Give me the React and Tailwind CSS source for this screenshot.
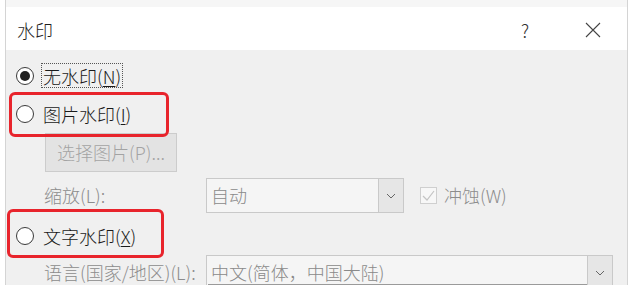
import React from "react";

const font = { fontFamily: '"Noto Sans CJK SC", "Noto Sans", sans-serif' };

function Radio({ checked }) {
  return (
    <span className="w-[18px] h-[18px] rounded-full border border-[#3a3a3a] bg-white flex items-center justify-center shrink-0">
      {checked && <span className="w-[10px] h-[10px] rounded-full bg-[#222]" />}
    </span>
  );
}

function Select({ text, width, underline }) {
  return (
    <div
      className="flex h-[35px] border border-[#c9c9c9] bg-[#f5f5f5] shrink-0"
      style={{ width }}
    >
      <div className="flex-1 flex items-center pl-[4px] text-[18px] text-[#8a8a8a] relative">
        {text}
        {underline && (
          <span className="absolute left-[1px] right-0 bottom-[2px] h-[3px] border-t border-b border-[#9a9a9a]" />
        )}
      </div>
      <div className="w-[25px] border-l border-[#c9c9c9] bg-[#e6e6e6] flex items-center justify-center">
        <svg width="10" height="6" viewBox="0 0 10 6">
          <path d="M1 1 L5 5 L9 1" fill="none" stroke="#666" strokeWidth="1" />
        </svg>
      </div>
    </div>
  );
}

export default function App() {
  return (
    <div className="w-[629px] h-[285px] bg-white overflow-hidden font-light" style={font}>
      <div className="ml-[5px] w-[623px] h-[285px] flex flex-col border-l border-r border-[#d4d4d4]">
        <div className="h-[7px] shrink-0 bg-[#f6f6f6]" />
        <div className="h-[43px] shrink-0 bg-white flex items-center pl-[11px] pr-[26px] pt-[3px] text-[18px] text-[#1e1e1e]">
          <span className="flex-1">水印</span>
          <span className="text-[#333] mr-[56px]">?</span>
          <svg width="16" height="16" viewBox="0 0 16 16">
            <path d="M1 1 L15 15 M15 1 L1 15" stroke="#444" strokeWidth="1.1" />
          </svg>
        </div>
        <div className="relative flex-1 min-h-0 overflow-hidden bg-[#f0f0f0] flex flex-col text-[18px] text-[#1a1a1a]">
          <div className="mt-[13px] h-[25px] shrink-0 flex items-center pl-[10px] gap-[7px]">
            <Radio checked />
            <span className="border border-dotted border-[#555] h-[25px] px-[1px] flex items-center leading-none">
              无水印(<span className="underline underline-offset-2">N</span>)
            </span>
          </div>
          <div className="mt-[14px] h-[24px] shrink-0 flex items-center pl-[10px] gap-[9px]">
            <Radio />
            <span className="leading-none">
              图片水印(<span className="underline underline-offset-2">I</span>)
            </span>
          </div>
          <div className="mt-[7px] ml-[39px] w-[132px] h-[39px] shrink-0 border border-[#cccccc] bg-[#e3e3e3] flex items-center justify-center text-[#a3a3a3]">
            选择图片(P)...
          </div>
          <div className="mt-[6px] h-[35px] shrink-0 flex items-center">
            <span className="ml-[38px] w-[162px] text-[#8c8c8c]">缩放(L):</span>
            <Select text="自动" width="198px" />
            <span className="ml-[16px] w-[17px] h-[17px] border border-[#cfcfcf] bg-[#f7f7f7] flex items-center justify-center">
              <svg width="13" height="11" viewBox="0 0 13 11">
                <path d="M1 6 L5 10 L12 1" fill="none" stroke="#c4c4c4" strokeWidth="1.2" />
              </svg>
            </span>
            <span className="ml-[7px] text-[#8c8c8c]">冲蚀(W)</span>
          </div>
          <div className="mt-[11px] h-[24px] shrink-0 flex items-center pl-[10px] gap-[9px]">
            <Radio />
            <span className="leading-none">
              文字水印(<span className="underline underline-offset-2">X</span>)
            </span>
          </div>
          <div className="mt-[7px] h-[35px] shrink-0 flex items-center">
            <span className="ml-[38px] w-[162px] text-[#8c8c8c]">语言(国家/地区)(L):</span>
            <Select text="中文(简体，中国大陆)" width="407px" underline />
          </div>

          <div className="absolute left-[3px] top-[42px] w-[160px] h-[45px] border-[3px] border-[#e8242c] rounded-[6px]" />
          <div className="absolute left-[1px] top-[159px] w-[157px] h-[49px] border-[3px] border-[#e8242c] rounded-[6px]" />
        </div>
      </div>
    </div>
  );
}
